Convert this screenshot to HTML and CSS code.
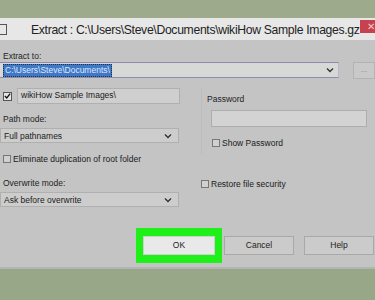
FILE: index.html
```html
<!DOCTYPE html>
<html>
<head>
<meta charset="utf-8">
<link rel="stylesheet" href="styles.css">
</head>
<body>
<div class="top"></div>
<div class="titlebar">
  <div class="ticon"></div>
  <div class="title">Extract : C:\Users\Steve\Documents\wikiHow Sample Images.gz</div>
  <div class="close">✕</div>
</div>
<div class="dialog">
  <div class="label l-extract">Extract to:</div>
  <div class="row-path">
    <div class="combo"><span class="sel">C:\Users\Steve\Documents\</span><span class="chev"><svg width="8" height="6" viewBox="0 0 8 6"><path d="M1 1.5 L4 4.5 L7 1.5" fill="none" stroke="#333" stroke-width="1.4"/></svg></span></div>
    <div class="browse">...</div>
  </div>
  <div class="cols">
    <div class="left">
      <div class="row-sub">
        <div class="cb checked"><svg width="8" height="8" viewBox="0 0 8 8"><path d="M1 4 L3.2 6.3 L7 1.2" fill="none" stroke="#111" stroke-width="1.5"/></svg></div>
        <div class="input sub">wikiHow Sample Images\</div>
      </div>
      <div class="label l-path">Path mode:</div>
      <div class="select">Full pathnames<span class="chev"><svg width="8" height="6" viewBox="0 0 8 6"><path d="M1 1.5 L4 4.5 L7 1.5" fill="none" stroke="#333" stroke-width="1.4"/></svg></span></div>
      <div class="check l-elim"><span class="cb"></span>Eliminate duplication of root folder</div>
      <div class="label l-over">Overwrite mode:</div>
      <div class="select">Ask before overwrite<span class="chev"><svg width="8" height="6" viewBox="0 0 8 6"><path d="M1 1.5 L4 4.5 L7 1.5" fill="none" stroke="#333" stroke-width="1.4"/></svg></span></div>
    </div>
    <div class="right">
      <div class="pwgroup">
        <div class="label l-pw">Password</div>
        <div class="input pw"></div>
        <div class="check l-show"><span class="cb"></span>Show Password</div>
      </div>
      <div class="check l-restore"><span class="cb"></span>Restore file security</div>
    </div>
  </div>
  <div class="buttons">
    <div class="okwrap"><div class="btn ok">OK</div></div>
    <div class="btn cancel">Cancel</div>
    <div class="btn help">Help</div>
  </div>
</div>
<div class="bottom"></div>
</body>
</html>
```
FILE: styles.css
```css
html, body {
  margin: 0;
  padding: 0;
  width: 375px;
  height: 300px;
  overflow: hidden;
  background: #98a787;
  font-family: "Liberation Sans", Arial, sans-serif;
  color: #1a1a1a;
}
.top {
  height: 18px;
  background: #9dab8c;
}
.titlebar {
  height: 22px;
  background: #e7e7e7;
  display: flex;
  align-items: center;
  position: relative;
  overflow: hidden;
}
.ticon {
  width: 6px;
  height: 9px;
  border: 1px solid #555;
  border-left: none;
  margin-right: 24px;
  margin-top: 1px;
  flex: none;
}
.title {
  font-size: 12.2px;
  color: #222;
  white-space: nowrap;
  letter-spacing: -0.32px;
  margin-top: 1px;
}
.close {
  position: absolute;
  right: 0;
  top: 2px;
  width: 15px;
  height: 13px;
  background: #c7424f;
  color: #f3c6cb;
  font-size: 10px;
  line-height: 13px;
  text-align: right;
}
.dialog {
  background: #c4c4c4;
  height: 229px;
  padding-top: 10px;
  box-sizing: border-box;
  border-bottom: 2px solid #b4b4b4;
  font-size: 8.5px;
}
.label {
  color: #1e1e1e;
  padding-left: 3px;
  height: 12px;
  line-height: 12px;
}
.row-path {
  display: flex;
  align-items: flex-start;
}
.combo {
  width: 339px;
  height: 16px;
  box-sizing: border-box;
  border-top: 1px solid #8e8ab0;
  border-bottom: 1px solid #8e8ab0;
  border-right: 1px solid #b8b8c6;
  background: #d6d9d6;
  display: flex;
  align-items: center;
  padding-left: 3px;
}
.sel {
  background: #3f78c9;
  color: #dfe9f7;
  padding: 0 1px;
  line-height: 11px;
  border: 1px dotted #233;
}
.chev {
  margin-left: auto;
  margin-right: 4px;
  display: flex;
}
.browse {
  margin-left: 14px;
  width: 22px;
  height: 17px;
  box-sizing: border-box;
  border: 1px solid #b3b3b3;
  background: #c9c9c9;
  color: #888;
  font-size: 8px;
  text-align: center;
  line-height: 14px;
}
.cols {
  display: flex;
  margin-top: 9px;
}
.left {
  width: 180px;
}
.right {
  margin-left: 21px;
  flex: 1;
}
.row-sub {
  display: flex;
  align-items: center;
}
.cb {
  width: 8px;
  height: 8px;
  box-sizing: border-box;
  border: 1px solid #777;
  background: #d0d0d0;
  display: inline-flex;
  align-items: center;
  justify-content: center;
  flex: none;
}
.cb.checked {
  background: #e6e6e6;
  margin-left: 3px;
  width: 9px;
  height: 9px;
  border-color: #555;
}
.input {
  box-sizing: border-box;
  border: 1px solid #adadad;
  background: #cfcfcf;
}
.sub {
  margin-left: 5px;
  width: 165px;
  height: 16px;
  line-height: 12px;
  padding-left: 3px;
  color: #1a1a1a;
  border-color: #b0b0b0;
}
.l-path {
  margin-top: 9px;
}
.select {
  margin-top: 3px;
  height: 15px;
  width: 179px;
  box-sizing: border-box;
  border: 1px solid #b0b0b0;
  background: #cdcdcd;
  display: flex;
  align-items: center;
  padding-left: 3px;
}
.select .chev {
  margin-right: 6px;
}
.check {
  display: flex;
  align-items: center;
  gap: 2px;
  height: 12px;
}
.l-elim {
  margin-top: 10px;
  padding-left: 3px;
}
.l-over {
  margin-top: 12px;
}
.pwgroup {
  border-left: 1px solid #bcbcbc;
  padding-left: 5px;
  padding-top: 5px;
  height: 66px;
  box-sizing: border-box;
}
.l-pw {
  padding-left: 0;
}
.pw {
  width: 156px;
  height: 17px;
  margin-top: 5px;
  margin-left: 4px;
  background: #d3d3d3;
}
.l-show {
  margin-top: 10px;
  margin-left: 5px;
}
.l-restore {
  margin-top: 24px;
}
.buttons {
  display: flex;
  align-items: center;
  margin-top: 21px;
  padding-left: 136px;
}
.okwrap {
  background: #1ff01a;
  padding: 8px 7px;
  width: 86px;
  box-sizing: border-box;
}
.btn {
  height: 19px;
  box-sizing: border-box;
  border: 1px solid #a9a9a9;
  background: #cbcbcb;
  text-align: center;
  line-height: 17px;
  font-size: 8.5px;
  color: #222;
}
.ok {
  background: #e9e9e9;
  border-color: #cfcfcf;
  width: 72px;
}
.cancel {
  width: 70px;
  margin-left: 2px;
}
.help {
  width: 70px;
  margin-left: 10px;
}
.bottom {
  height: 42px;
}
```
